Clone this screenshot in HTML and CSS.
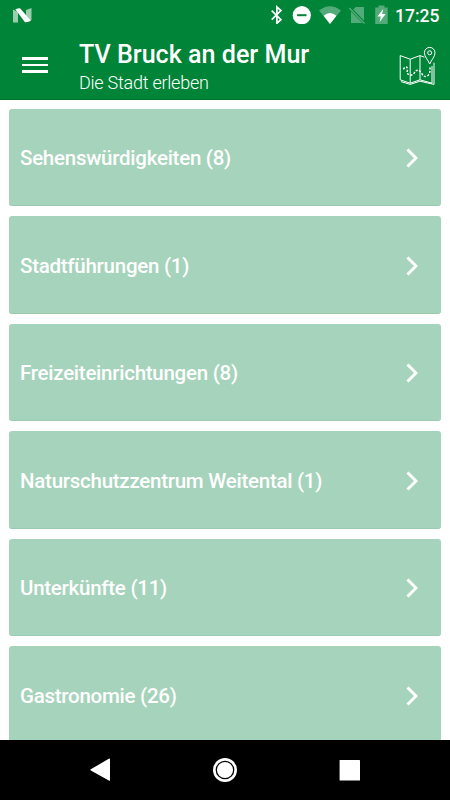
FILE: index.html
```html
<!DOCTYPE html>
<html lang="de">
<head>
<meta charset="utf-8">
<title>TV Bruck an der Mur</title>
<link rel="stylesheet" href="styles.css">
</head>
<body>
<div class="screen">
  <div class="status-bar">
    <svg class="n-logo" width="19" height="16" viewBox="0 0 19 16">
      <path d="M0 1.5L5 4v10.5H0zM13 2l5.5-2v12l-5.5 1z" fill="#fff" opacity=".6"/>
      <path d="M2.3 1.2Q5 .2 7 .2L18 12.8Q15 14.3 12 14.3z" fill="#fff"/>
    </svg>
    <svg class="status-icons" width="125" height="24" viewBox="0 0 125 24">
      <path d="M2 10.6L11.2 19.6 7.2 23.2V7L11.2 10.6 2 19.6M.8 15h.1M13.1 15h.1" transform="translate(-.3 0)" fill="none" stroke="#fff" stroke-width="1.7"/>
      <circle cx="31.8" cy="15.2" r="9.1" fill="#fff"/>
      <path d="M27.1 15.2h9.4" stroke="#008438" stroke-width="2"/>
      <path d="M49 10.5Q60 2 71 10.5L60 24z" fill="#fff" opacity=".32"/>
      <path d="M53.6 15.8Q60 10 66.4 15.8L60 24z" fill="#fff"/>
      <path d="M85.8 7H94v13.6L83.2 9.6zM81 11.6L92.3 23H81z" fill="#fff" opacity=".32"/>
      <path d="M79.3 7.9L94.5 23.5" stroke="#fff" stroke-opacity=".32" stroke-width="1.4"/>
      <path d="M105.2 7.4h3.3V5.5h6v1.9h3.2V24h-12.5z" fill="#fff" opacity=".32"/>
      <path d="M113.3 8.8L107.5 16.5h3.3l-1.2 5.6 6-8h-3.4z" fill="#fff"/>
    </svg>
    <span class="time">17:25</span>
  </div>
  <header class="app-bar">
    <div class="menu"><i></i><i></i><i></i></div>
    <div class="titles">
      <h1>TV Bruck an der Mur</h1>
      <p>Die Stadt erleben</p>
    </div>
    <svg class="map" width="38" height="40" viewBox="0 0 38 40" fill="none" stroke="#fff">
      <path d="M25.4 11.2L21 9.6 11.2 13.2 1.2 9.6V33.8L11.2 37.2 21 33.8 33 37.2V20M11.2 13.2V37.2M21 10V33.8M2 35.6L11.2 38.4 21 35.2 35 38.4V16.7" stroke-width="1"/>
      <path d="M30.7 18C28.8 13.5 25.4 10.8 25.4 6.7a5.3 5.3 0 0 1 10.6 0C36 10.8 32.6 13.5 30.7 18z" stroke-width="1"/>
      <circle cx="30.7" cy="6.8" r="2" stroke-width="1"/>
      <path d="M4.3 23.2Q7.5 18.8 8.8 22.8 6.8 28.5 11.5 29.3 14.2 29 15.5 26.5 18.5 21.5 22.7 27.2 24.5 32 28.7 29.7 32 26.5 30.7 20.5" stroke-width="1.5" stroke-dasharray="2.1 1.5"/>
    </svg>
  </header>
  <main class="list">
    <a class="card"><span>Sehenswürdigkeiten (8)</span><svg class="chevron" viewBox="0 0 12 20"><path d="M1.5 1.5L10 10 1.5 18.5"/></svg></a>
    <a class="card"><span>Stadtführungen (1)</span><svg class="chevron" viewBox="0 0 12 20"><path d="M1.5 1.5L10 10 1.5 18.5"/></svg></a>
    <a class="card"><span>Freizeiteinrichtungen (8)</span><svg class="chevron" viewBox="0 0 12 20"><path d="M1.5 1.5L10 10 1.5 18.5"/></svg></a>
    <a class="card"><span>Naturschutzzentrum Weitental (1)</span><svg class="chevron" viewBox="0 0 12 20"><path d="M1.5 1.5L10 10 1.5 18.5"/></svg></a>
    <a class="card"><span>Unterkünfte (11)</span><svg class="chevron" viewBox="0 0 12 20"><path d="M1.5 1.5L10 10 1.5 18.5"/></svg></a>
    <a class="card"><span>Gastronomie (26)</span><svg class="chevron" viewBox="0 0 12 20"><path d="M1.5 1.5L10 10 1.5 18.5"/></svg></a>
  </main>
  <nav class="nav-bar">
    <svg width="24" height="24" viewBox="0 0 24 24"><path d="M2.8 11.2L20.8 .8Q22 .2 22 1.2V22.2Q22 23.2 20.8 22.6L2.8 12.4Q1.8 11.8 2.8 11.2z" fill="#fff"/></svg>
    <svg width="24" height="24" viewBox="0 0 24 24"><circle cx="12" cy="12" r="12" fill="#fff"/><circle cx="12" cy="12" r="8.7" fill="none" stroke="#000" stroke-width="1.3"/></svg>
    <svg width="24" height="24" viewBox="0 0 24 24"><rect x="1.6" y="2" width="20.4" height="20.6" rx=".5" fill="#fff"/></svg>
  </nav>
</div>
</body>
</html>
```
FILE: styles.css
```css
* { box-sizing: border-box; }
body { margin: 0; font-family: Roboto, "Liberation Sans", sans-serif; }
.screen {
  width: 450px;
  height: 800px;
  display: flex;
  flex-direction: column;
  overflow: hidden;
  background: #fff;
  color: #fff;
}
.status-bar {
  height: 30px;
  flex: none;
  display: flex;
  align-items: flex-start;
  background: #008438;
  padding-left: 13px;
}
.n-logo { margin-top: 8px; }
.status-icons { margin-left: 238px; flex: none; }
.time {
  margin-left: 0;
  font-size: 17.5px;
  font-weight: 500;
  line-height: 32px;
}
.app-bar {
  height: 70px;
  flex: none;
  display: flex;
  align-items: flex-start;
  background: #008438;
  border-bottom: 1px solid #007229;
  padding: 0 13px 0 22px;
}
.menu {
  width: 26px;
  margin-top: 27px;
  display: flex;
  flex-direction: column;
  gap: 4px;
}
.menu i { height: 2.6px; background: #fff; }
.titles { margin-left: 31px; flex: 1; white-space: nowrap; }
h1 {
  margin: 10px 0 0;
  font-size: 25.1px;
  line-height: 30px;
  font-weight: 500;
}
p {
  margin: 2px 0 0;
  font-size: 18px;
  line-height: 22px;
  font-weight: 300;
  letter-spacing: -.24px;
}
.map { margin-top: 16px; flex: none; }
.list {
  flex: 1;
  min-height: 0;
  overflow: hidden;
  padding: 9px 9px 0;
  display: flex;
  flex-direction: column;
  gap: 10.2px;
}
.card {
  height: 97.3px;
  flex: none;
  display: flex;
  align-items: center;
  justify-content: space-between;
  padding: 2px 23px 0 11px;
  border-radius: 3px;
  background: #a6d3bb;
  border-bottom: 1px solid #9bcab0;
  font-size: 20.5px;
  font-weight: 500;
  letter-spacing: -.26px;
  white-space: nowrap;
}
.chevron { width: 12px; height: 20px; fill: none; stroke: #fff; stroke-width: 3; }
.nav-bar {
  height: 60px;
  flex: none;
  background: #000;
  display: flex;
  align-items: center;
  justify-content: space-between;
  padding: 0 88px;
}
```
